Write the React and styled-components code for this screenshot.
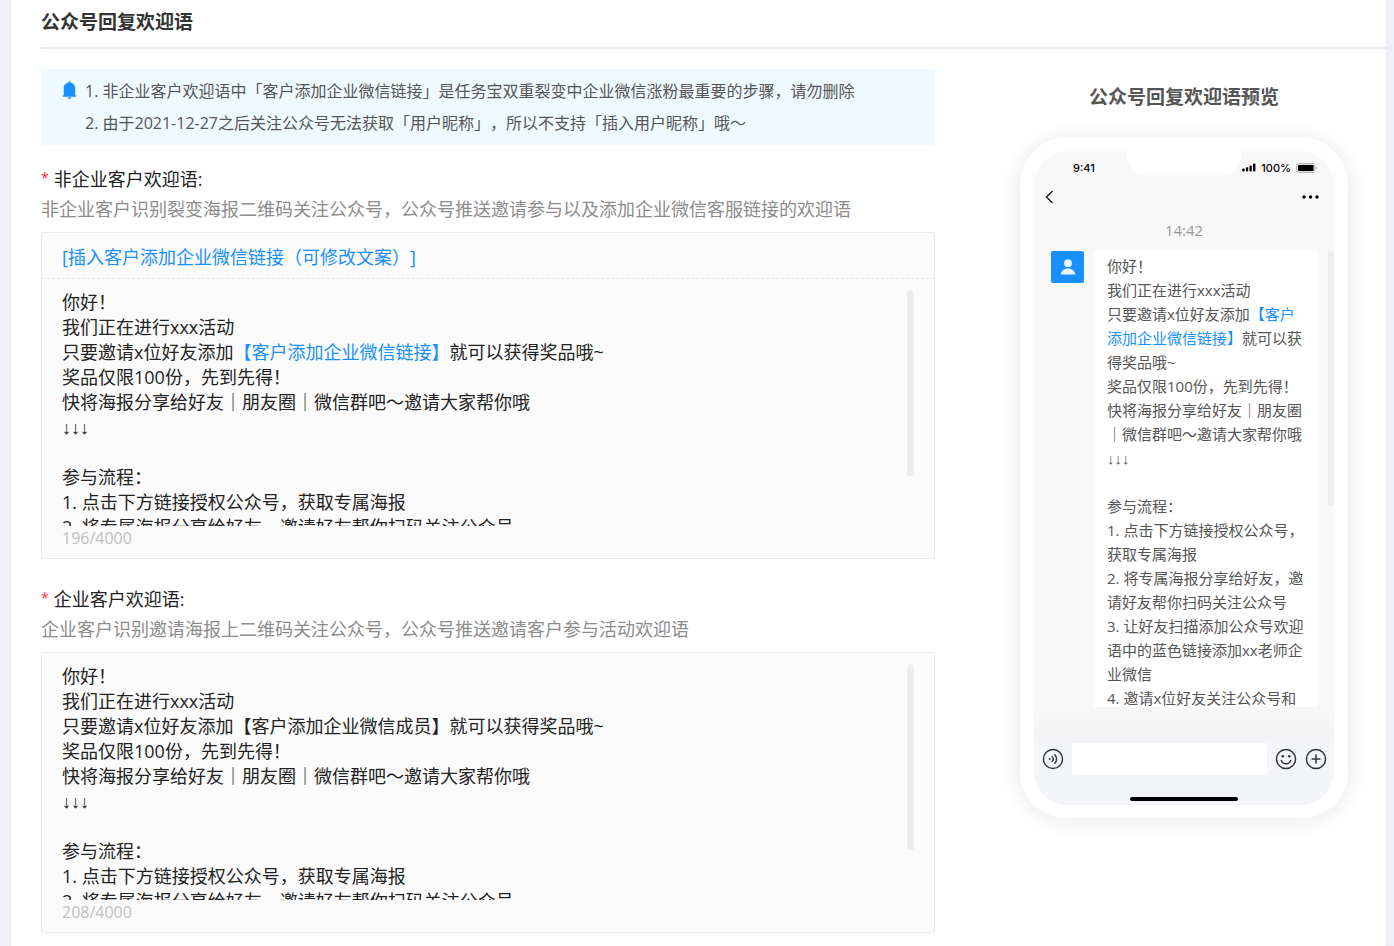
import React, { useState } from "react";
import styled, { createGlobalStyle } from "styled-components";

const GlobalStyle = createGlobalStyle`
    * {
        box-sizing: border-box;
    }
    body {
        margin: 0;
        background: #f0f1f6;
        color: #222;
        font-family: "Open Sans", "Liberation Sans", "Noto Sans CJK SC", sans-serif;
        font-size: 18px;
        text-spacing-trim: space-all;
    }
`;

const INTRO = "你好！\n我们正在进行xxx活动\n只要邀请x位好友添加";
const DETAIL = "就可以获得奖品哦~\n奖品仅限100份，先到先得！\n快将海报分享给好友｜朋友圈｜微信群吧～邀请大家帮你哦\n↓↓↓\n\n参与流程：\n1. 点击下方链接授权公众号，获取专属海报\n2. 将专属海报分享给好友，邀请好友帮你扫码关注公众号";
const DETAIL_MORE = "\n3. 让好友扫描添加公众号欢迎语中的蓝色链接添加xx老师企业微信\n4. 邀请x位好友关注公众号和";

const Panel = styled.main`
    min-height: 100vh;
    margin: 0 8px 0 11px;
    padding: 0 0 13px 30px;
    background: #fff;
    box-shadow: 0 0 4px rgba(0, 0, 0, 0.06);
`;

const PanelTitle = styled.h1`
    margin: 0;
    padding: 9px 0 11px;
    border-bottom: 2px solid #e8eaf2;
    color: #333;
    font-size: 19px;
    line-height: 27px;
`;

const Columns = styled.div`
    display: flex;
    gap: 47px;
    padding-top: 20px;
`;

const FormColumn = styled.form`
    flex: 1;
    min-width: 0;
`;

const Notice = styled.div`
    display: flex;
    gap: 8px;
    padding: 6px 21px;
    margin-bottom: 19px;
    background: #eefaff;
    color: #555;
    font-size: 16px;
    line-height: 32px;

    svg {
        flex: none;
        margin-top: 6px;
    }
    p {
        margin: 0;
    }
`;

const Field = styled.section`
    margin-bottom: 25px;

    &:last-child {
        margin-bottom: 0;
    }
`;

const FieldLabel = styled.label`
    display: flex;
    gap: 5px;
    line-height: 30px;

    &::before {
        content: "*";
        color: #ff2d2d;
        font-size: 14px;
        line-height: 28px;
    }
`;

const FieldHint = styled.p`
    margin: 0 0 8px;
    color: #8c8c8c;
    line-height: 30px;
`;

const EditorBox = styled.div`
    border: 1px solid #ebebeb;
    border-radius: 2px;
    background: #fbfbfb;
`;

const EditorToolbar = styled.div`
    display: flex;
    align-items: center;
    height: 46px;
    padding: 0 20px;
    border-bottom: 1px dashed #e8e8e8;
`;

const InsertButton = styled.button`
    padding: 0;
    border: 0;
    background: none;
    color: #1890ff;
    font: inherit;
    cursor: pointer;
`;

const EditorBody = styled.div`
    display: flex;
    height: 247px;
    padding: 11px 20px 0;
`;

const EditorArea = styled.div`
    flex: 1;
    overflow: hidden;
    line-height: 25px;
    white-space: pre-wrap;
    outline: none;
`;

const EditorTextarea = styled.textarea`
    flex: 1;
    padding: 0;
    border: 0;
    background: none;
    color: inherit;
    font: inherit;
    line-height: 25px;
    overflow: hidden;
    resize: none;
    outline: none;
`;

const ScrollThumb = styled.div`
    flex: none;
    width: ${(props) => props.$width}px;
    height: ${(props) => props.$length}px;
    border-radius: 4px;
    background: #ededed;
`;

const Counter = styled.div`
    padding: 0 20px 8px;
    color: #bfbfbf;
    font-size: 16px;
    line-height: 24px;
`;

const BlueLink = styled.a`
    color: #1890ff;
    text-decoration: none;
`;

const PreviewColumn = styled.aside`
    display: flex;
    flex: none;
    flex-direction: column;
    align-items: center;
    gap: 27px;
    width: 404px;
    padding-top: 14px;
`;

const PreviewTitle = styled.h2`
    margin: 0;
    color: #555;
    font-size: 19px;
    line-height: 28px;
`;

const Phone = styled.div`
    width: 328px;
    padding: 13px 14px;
    border-radius: 46px;
    background: #fff;
    box-shadow: 0 2px 24px rgba(0, 0, 0, 0.09);
`;

const Screen = styled.div`
    position: relative;
    overflow: hidden;
    border-radius: 34px;
    background: #f8f8f8;
`;

const Notch = styled.div`
    position: absolute;
    top: 0;
    left: 50%;
    width: 114px;
    height: 24px;
    margin-left: -57px;
    border-radius: 0 0 20px 20px;
    background: #fff;
`;

const StatusBar = styled.div`
    display: flex;
    align-items: center;
    justify-content: space-between;
    height: 33px;
    padding: 0 16px 0 39px;
    color: #000;
    font-family: Inter, sans-serif;
    font-size: 11px;
    font-weight: 500;
`;

const StatusIcons = styled.div`
    display: flex;
    align-items: center;
    gap: 5px;
`;

const NavBar = styled.div`
    display: flex;
    align-items: center;
    justify-content: space-between;
    height: 26px;
    padding: 0 15px 0 11px;
`;

const IconButton = styled.button`
    display: flex;
    padding: 0;
    border: 0;
    background: none;
    cursor: pointer;
`;

const ChatTime = styled.div`
    color: #999;
    font-size: 15px;
    line-height: 41px;
    text-align: center;
`;

const Chat = styled.div`
    display: flex;
    align-items: flex-start;
    gap: 10px;
    height: 456px;
    padding-left: 17px;
`;

const Avatar = styled.div`
    display: flex;
    align-items: center;
    justify-content: center;
    width: 33px;
    height: 32px;
    border-radius: 2px;
    background: #1890ff;
`;

const Bubble = styled.div`
    flex: 1;
    height: 100%;
    overflow: hidden;
    padding: 3px 12px 0 13px;
    border-radius: 2px;
    background: #fff;
    color: #555;
    font-size: 15px;
    line-height: 24px;
    white-space: pre-wrap;
`;

const ChatFade = styled.div`
    height: 31px;
    background: linear-gradient(#f8f8f8, #f3f3f3);
`;

const InputBar = styled.div`
    display: flex;
    align-items: center;
    gap: 8px;
    padding: 5px 7px 0 8px;
    background: #f3f5f8;
`;

const ChatInput = styled.input`
    flex: 1;
    min-width: 0;
    height: 32px;
    border: 0;
    border-radius: 4px;
    background: #fff;
    outline: none;
`;

const HomeArea = styled.div`
    display: flex;
    justify-content: center;
    height: 30px;
    padding-top: 22px;
    background: #f3f5f8;

    &::after {
        content: "";
        width: 108px;
        height: 4px;
        border-radius: 2px;
        background: #000;
    }
`;

const BellIcon = () => (
    <svg width="15" height="18" viewBox="0 0 15 18" fill="#1890ff">
        <path d="M6.700 0.300h1.600v1.200c3 .4 4.900 2.900 4.900 6v7h1v1.300H.7v-1.300h1v-7c0-3.100 2-5.600 5-6z" />
        <path d="M5.500 16.300h4a2 1.500 0 0 1-4 0z" />
    </svg>
);

const SignalIcon = () => (
    <svg width="14" height="9" viewBox="0 0 14 9" fill="#000">
        <rect x="0.300" y="5.500" width="2.300" height="3" rx="0.800" />
        <rect x="3.900" y="4.300" width="2.300" height="4.200" rx="0.800" />
        <rect x="7.500" y="2.500" width="2.300" height="6" rx="0.800" />
        <rect x="11.100" y="0.500" width="2.300" height="8" rx="0.800" />
    </svg>
);

const BatteryIcon = () => (
    <svg width="22" height="10" viewBox="0 0 22 10">
        <rect x="0.500" y="0.500" width="18.500" height="9" rx="2" fill="#ddd" stroke="#bbb" />
        <rect x="2" y="2" width="15.500" height="6" rx="0.800" fill="#000" />
        <path d="M20.300 3.600v2.800c.9-.4.9-2.400 0-2.800z" fill="#999" />
    </svg>
);

const BackIcon = () => (
    <svg width="9" height="14" viewBox="0 0 9 14" fill="none" stroke="#111" strokeWidth="1.300">
        <path d="M7.500 1L1.500 7l6 6" />
    </svg>
);

const MoreIcon = () => (
    <svg width="17" height="4" viewBox="0 0 17 4" fill="#000">
        <circle cx="2" cy="2" r="1.700" />
        <circle cx="8.500" cy="2" r="1.700" />
        <circle cx="15" cy="2" r="1.700" />
    </svg>
);

const UserIcon = () => (
    <svg width="16" height="16" viewBox="0 0 16 16" fill="#e9f4ff">
        <circle cx="8" cy="4.200" r="3.900" />
        <path d="M.8 15.600c0-3.600 3-6.200 7.200-6.200s7.200 2.600 7.200 6.200z" />
    </svg>
);

const VoiceIcon = () => (
    <svg width="22" height="22" viewBox="0 0 22 22" fill="none" stroke="#333" strokeWidth="1.400" strokeLinecap="round">
        <circle cx="11" cy="11" r="9.500" />
        <circle cx="7.700" cy="11" r="1" fill="#333" stroke="none" />
        <path d="M10.200 8.600a3.600 3.600 0 0 1 0 4.800M12.900 6.800a6.200 6.200 0 0 1 0 8.400" />
    </svg>
);

const SmileIcon = () => (
    <svg width="22" height="22" viewBox="0 0 22 22" fill="none" stroke="#333" strokeWidth="1.500" strokeLinecap="round">
        <circle cx="11" cy="11" r="9.500" />
        <circle cx="7.800" cy="8.300" r="1.300" fill="#333" stroke="none" />
        <circle cx="14.200" cy="8.300" r="1.300" fill="#333" stroke="none" />
        <path d="M6.300 12.400c.7 2.300 2.500 3.400 4.700 3.400s4-1.100 4.700-3.400" />
    </svg>
);

const PlusIcon = () => (
    <svg width="22" height="22" viewBox="0 0 22 22" fill="none" stroke="#333" strokeWidth="1.500" strokeLinecap="round">
        <circle cx="11" cy="11" r="9.500" />
        <path d="M11 7v8M7 11h8" />
    </svg>
);

const App = () => {
    const [memberText, setMemberText] = useState(`${INTRO}【客户添加企业微信成员】${DETAIL}`);
    const [message, setMessage] = useState("");

    return (
        <>
            <GlobalStyle />
            <Panel>
                <PanelTitle>公众号回复欢迎语</PanelTitle>
                <Columns>
                    <FormColumn>
                        <Notice>
                            <BellIcon />
                            <div>
                                <p>1. 非企业客户欢迎语中「客户添加企业微信链接」是任务宝双重裂变中企业微信涨粉最重要的步骤，请勿删除</p>
                                <p>2. 由于2021-12-27之后关注公众号无法获取「用户昵称」，所以不支持「插入用户昵称」哦～</p>
                            </div>
                        </Notice>

                        <Field>
                            <FieldLabel as="div" id="guest-label">非企业客户欢迎语:</FieldLabel>
                            <FieldHint>非企业客户识别裂变海报二维码关注公众号，公众号推送邀请参与以及添加企业微信客服链接的欢迎语</FieldHint>
                            <EditorBox>
                                <EditorToolbar>
                                    <InsertButton type="button">[插入客户添加企业微信链接（可修改文案）]</InsertButton>
                                </EditorToolbar>
                                <EditorBody>
                                    <EditorArea
                                        contentEditable
                                        suppressContentEditableWarning
                                        spellCheck={false}
                                        role="textbox"
                                        aria-multiline="true"
                                        aria-labelledby="guest-label"
                                    >
                                        {INTRO}
                                        <BlueLink href="#link">【客户添加企业微信链接】</BlueLink>
                                        {DETAIL}
                                    </EditorArea>
                                    <ScrollThumb $width={7} $length={186} />
                                </EditorBody>
                                <Counter>196/4000</Counter>
                            </EditorBox>
                        </Field>

                        <Field>
                            <FieldLabel htmlFor="member-text">企业客户欢迎语:</FieldLabel>
                            <FieldHint>企业客户识别邀请海报上二维码关注公众号，公众号推送邀请客户参与活动欢迎语</FieldHint>
                            <EditorBox>
                                <EditorBody>
                                    <EditorTextarea
                                        id="member-text"
                                        spellCheck={false}
                                        value={memberText}
                                        onChange={(e) => setMemberText(e.target.value)}
                                    />
                                    <ScrollThumb $width={7} $length={186} />
                                </EditorBody>
                                <Counter>208/4000</Counter>
                            </EditorBox>
                        </Field>
                    </FormColumn>

                    <PreviewColumn>
                        <PreviewTitle>公众号回复欢迎语预览</PreviewTitle>
                        <Phone>
                            <Screen>
                                <Notch />
                                <StatusBar>
                                    <span>9:41</span>
                                    <StatusIcons>
                                        <SignalIcon />
                                        <span>100%</span>
                                        <BatteryIcon />
                                    </StatusIcons>
                                </StatusBar>
                                <NavBar>
                                    <IconButton type="button" aria-label="返回"><BackIcon /></IconButton>
                                    <IconButton type="button" aria-label="更多"><MoreIcon /></IconButton>
                                </NavBar>
                                <ChatTime>14:42</ChatTime>
                                <Chat>
                                    <Avatar><UserIcon /></Avatar>
                                    <Bubble>
                                        {INTRO}
                                        <BlueLink href="#link">【客户添加企业微信链接】</BlueLink>
                                        {DETAIL}
                                        {DETAIL_MORE}
                                    </Bubble>
                                    <ScrollThumb $width={6} $length={255} />
                                </Chat>
                                <ChatFade />
                                <InputBar>
                                    <IconButton type="button" aria-label="语音"><VoiceIcon /></IconButton>
                                    <ChatInput aria-label="消息" value={message} onChange={(e) => setMessage(e.target.value)} />
                                    <IconButton type="button" aria-label="表情"><SmileIcon /></IconButton>
                                    <IconButton type="button" aria-label="添加"><PlusIcon /></IconButton>
                                </InputBar>
                                <HomeArea />
                            </Screen>
                        </Phone>
                    </PreviewColumn>
                </Columns>
            </Panel>
        </>
    );
};

export default App;
